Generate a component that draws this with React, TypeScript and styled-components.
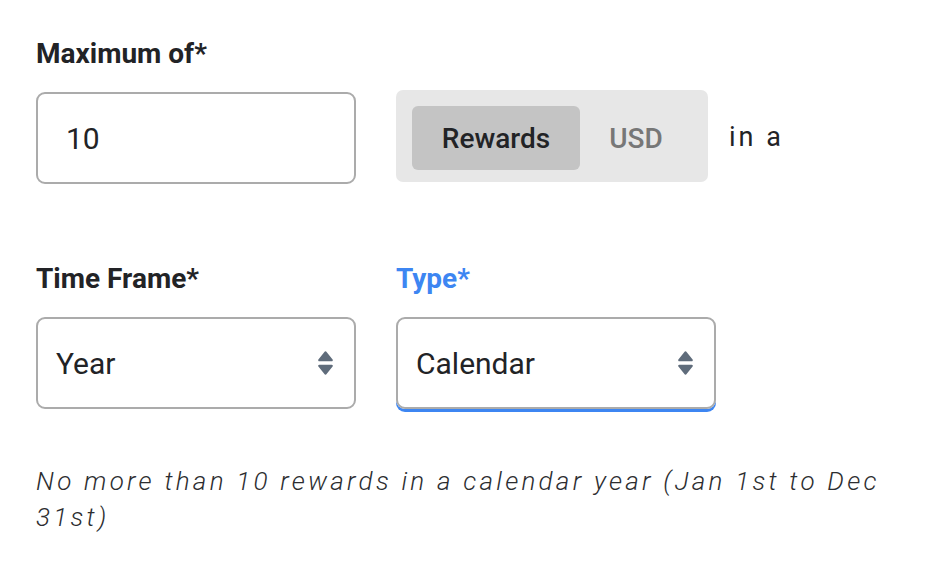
import React from "react";
import styled, { createGlobalStyle } from "styled-components";

const Global = createGlobalStyle`
  html, body { margin: 0; padding: 0; background: #ffffff; }
  body { font-family: Roboto, "Liberation Sans", Arial, sans-serif; color: #222326; }
  * { box-sizing: border-box; }
`;

const Page = styled.div`
  padding: 36px 36px 0 36px;
  width: 928px;
  height: 564px;
`;

const Label = styled.div<{ $active?: boolean }>`
  font-size: 28px;
  line-height: 36px;
  font-weight: 700;
  color: ${(p) => (p.$active ? "#3d86f2" : "#222326")};
  margin-bottom: 20px;
`;

const Row = styled.div<{ $mt?: number }>`
  display: flex;
  align-items: flex-start;
  gap: 40px;
  margin-top: ${(p) => p.$mt ?? 0}px;
`;

const Field = styled.div`
  display: flex;
  flex-direction: column;
  width: 320px;
`;

const Input = styled.div`
  width: 320px;
  height: 92px;
  border: 2px solid #ababab;
  border-radius: 9px;
  display: flex;
  align-items: center;
  padding-left: 28px;
  font-size: 30px;
  color: #222326;
`;

const Toggle = styled.div`
  display: flex;
  width: 312px;
  height: 92px;
  margin-top: -2px;
  padding: 16px 16px 12px 16px;
  background: #e7e7e7;
  border-radius: 7px;
`;

const ToggleButton = styled.div<{ $selected?: boolean; $w: number }>`
  width: ${(p) => p.$w}px;
  height: 64px;
  border-radius: 6px;
  display: flex;
  align-items: center;
  justify-content: center;
  font-size: 28px;
  font-weight: 500;
  background: ${(p) => (p.$selected ? "#c4c4c4" : "transparent")};
  color: ${(p) => (p.$selected ? "#222326" : "#777777")};
`;

const Suffix = styled.div`
  font-size: 27px;
  letter-spacing: 3px;
  color: #222326;
  margin-left: -19px;
  height: 92px;
  display: flex;
  align-items: center;
  margin-top: -1px;
`;

const Select = styled.div<{ $focused?: boolean }>`
  width: 320px;
  height: 92px;
  border: 2px solid #ababab;
  border-radius: 9px;
  display: flex;
  align-items: center;
  justify-content: space-between;
  padding: 0 20px 0 18px;
  font-size: 30px;
  color: #222326;
  box-shadow: ${(p) => (p.$focused ? "0 3px 0 0 #3d86f2" : "none")};
`;

const Helper = styled.p`
  margin: 54px 0 0 0;
  width: 870px;
  font-size: 26px;
  line-height: 36px;
  font-style: italic;
  font-weight: 300;
  letter-spacing: 3.25px;
  color: #2c2d30;
`;

const Arrows = () => (
  <svg width="17" height="24" viewBox="0 0 17 24" aria-hidden>
    <path
      d="M7.2 1.2 a1.6 1.6 0 0 1 2.6 0 L15.6 8.4 a1.2 1.2 0 0 1 -1 1.9 H2.4 a1.2 1.2 0 0 1 -1 -1.9 Z"
      fill="#5f6c7b"
    />
    <path
      d="M7.2 22.8 a1.6 1.6 0 0 0 2.6 0 L15.6 15.6 a1.2 1.2 0 0 0 -1 -1.9 H2.4 a1.2 1.2 0 0 0 -1 1.9 Z"
      fill="#5f6c7b"
    />
  </svg>
);

export default function App() {
  return (
    <>
      <Global />
      <Page>
        <Label>Maximum of*</Label>
        <Row>
          <Input>10</Input>
          <Toggle>
            <ToggleButton $selected $w={168}>
              Rewards
            </ToggleButton>
            <ToggleButton $w={112}>USD</ToggleButton>
          </Toggle>
          <Suffix>in a</Suffix>
        </Row>
        <Row $mt={77}>
          <Field>
            <Label>Time Frame*</Label>
            <Select>
              <span>Year</span>
              <Arrows />
            </Select>
          </Field>
          <Field>
            <Label $active>Type*</Label>
            <Select $focused>
              <span>Calendar</span>
              <Arrows />
            </Select>
          </Field>
        </Row>
        <Helper>
          No more than 10 rewards in a calendar year (Jan 1st to Dec 31st)
        </Helper>
      </Page>
    </>
  );
}
